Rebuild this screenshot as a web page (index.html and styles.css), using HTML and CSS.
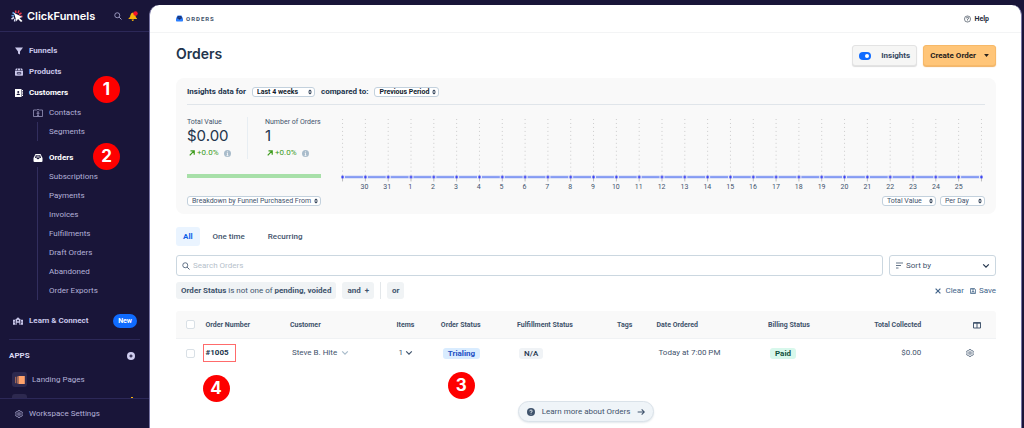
FILE: index.html
```html
<!DOCTYPE html>
<html lang="en">

<head>
    <title>Orders - ClickFunnels</title>
    <meta charset="UTF-8">
    <meta name="viewport" content="width=device-width, initial-scale=1.0">
    <link rel="stylesheet" href="styles.css">
</head>

<body>
    <!-- shared icons -->
    <svg class="defs" aria-hidden="true">
        <symbol id="search" viewBox="0 0 16 16">
            <circle cx="6.5" cy="6.5" r="5" fill="none" stroke="currentColor" stroke-width="1.6" />
            <path d="M10.3 10.3 15 15" stroke="currentColor" stroke-width="1.8" />
        </symbol>
        <symbol id="updown" viewBox="0 0 8 10">
            <path d="M4 0 8 4.2H0zM4 10 8 5.8H0z" fill="currentColor" />
        </symbol>
        <symbol id="chevron" viewBox="0 0 10 10">
            <path d="M1.5 3 5 6.5 8.5 3" fill="none" stroke="currentColor" stroke-width="1.5" />
        </symbol>
        <symbol id="gear" viewBox="0 0 16 16">
            <path d="M6.5 1h3l.6 2 1.5.9 2-.5 1.5 2.6L13.700 7.5v1l1.4 1.5-1.5 2.6-2-.5-1.5.9-.6 2h-3l-.6-2-1.5-.9-2 .5L.9 10l1.4-1.500v-1L.9 6l1.5-2.600 2 .5 1.500-.9z" fill="none" stroke="currentColor" stroke-width="1.5" />
            <circle cx="8" cy="8" r="2.5" fill="none" stroke="currentColor" stroke-width="1.5" />
        </symbol>
        <symbol id="inbox" viewBox="0 0 18 16">
            <path d="M4 0h10l4 8v6q0 2-2 2H2q-2 0-2-2V8z" fill="currentColor" />
            <path d="M4.5 2.5h9L15 8h-3q-.5 2.5-3 2.5T6 8H3z" class="inbox-tray" />
            <path d="M6 4.5h6M5.5 6.500h7" stroke="currentColor" stroke-width="1.2" />
        </symbol>
        <symbol id="info" viewBox="0 0 10 10">
            <circle cx="5" cy="5" r="5" fill="#a9bccb" />
            <path d="M5 2v1.3M5 4.2V8M4 4.6h1M3.7 8h2.6" stroke="#f9f9f9" stroke-width="1.2" />
        </symbol>
        <symbol id="trend" viewBox="0 0 10 10">
            <path d="M1.2 9 8 2M2.5 1.5H8.7V7.8" fill="none" stroke="currentColor" stroke-width="2" />
        </symbol>
    </svg>

    <aside class="sidebar">
        <header class="brand">
            <svg class="logo" viewBox="0 0 24 24">
                <g fill="none" stroke-width="3">
                    <path d="M9 1l1 5M16 1l-2 5" stroke="#e8394a" />
                    <path d="M21 6l-5 3M23 13l-4-1" stroke="#e8394a" />
                    <path d="M3 5l5 3M1 11l5 1" stroke="#6ba7e8" />
                    <path d="M1 18l5-3M7 23l1-5" stroke="#d9dcf5" />
                </g>
                <path d="M6 6 23 14l-6 2 6 6-3 2-6-6-3 5z" fill="#fff" />
            </svg>
            <span class="brand-name">ClickFunnels</span>
            <button type="button" class="icon-button brand-search" aria-label="Search"><svg class="icon"><use href="#search" /></svg></button>
            <button type="button" class="icon-button" aria-label="Notifications">
                <svg class="bell" viewBox="0 0 20 20">
                    <path d="M1 15q4-3 4-7Q6 3 10 3q5 1 5 6 0 4 3 6v1H1zM7 17h5q-1 3-2.5 3T7 17z" fill="#f8b40c" />
                    <circle cx="15" cy="5" r="4.5" fill="#f3122b" />
                </svg>
            </button>
        </header>

        <nav class="menu">
            <a href="#" class="item"><svg class="icon" viewBox="0 0 16 16"><path d="M0 1h16L10 9v6l-4-2V9z" fill="currentColor" /></svg>Funnels</a>
            <a href="#" class="item"><svg class="icon" viewBox="0 0 16 16">
                <path d="M2 1h12l2 4H0zM0 6h16v8q0 1.5-1.5 1.5h-13Q0 15.5 0 14z" fill="currentColor" />
                <path d="M5 1v4M11 1v4M4.5 9h7v3h-7z" stroke="#191539" fill="none" stroke-width="1.4" />
            </svg>Products</a>
            <a href="#" class="item active"><svg class="icon" viewBox="0 0 16 16">
                <path d="M0 0h13v16H0zM14 2h2v3h-2zM14 6.5h2v3h-2zM14 11h2v3h-2z" fill="currentColor" />
                <circle cx="6.5" cy="6" r="2" fill="#191539" />
                <path d="M3 12q0-3 3.5-3t3.5 3z" fill="#191539" />
            </svg>Customers<span class="marker marker-one">1</span></a>
            <a href="#" class="item sub"><svg class="icon wide" viewBox="0 0 20 16">
                <path d="M7 2H1v13h18V2h-6M7 2q3-2.5 6 0" fill="none" stroke="currentColor" stroke-width="1.3" />
                <circle cx="10" cy="6" r="1.5" fill="currentColor" />
                <path d="M7 8.5h6M10 8v3l-2 4M10 11l2 4" fill="none" stroke="currentColor" stroke-width="1.3" />
            </svg>Contacts</a>
            <div class="children">
                <a href="#" class="item">Segments</a>
            </div>
            <a href="#" class="item sub active spaced"><svg class="icon wide"><use href="#inbox" /></svg>Orders<span class="marker marker-two">2</span></a>
            <div class="children">
                <a href="#" class="item">Subscriptions</a>
                <a href="#" class="item">Payments</a>
                <a href="#" class="item">Invoices</a>
                <a href="#" class="item">Fulfillments</a>
                <a href="#" class="item">Draft Orders</a>
                <a href="#" class="item">Abandoned</a>
                <a href="#" class="item">Order Exports</a>
            </div>
            <a href="#" class="item learn"><svg class="icon wide" viewBox="0 0 22 16">
                <path d="M0 5h5L11 0l6 5h5v11h-8v-4H8v4H0z" fill="currentColor" />
                <path d="M5.5 6v10M16.5 6v10M2.7 9v3M19.300 9v3" stroke="#191539" stroke-width="1.4" />
                <circle cx="11" cy="7" r="2" fill="#191539" />
            </svg>Learn &amp; Connect<span class="new">New</span></a>

            <section class="apps">
                <h2>APPS
                    <button type="button" class="icon-button" aria-label="Add app"><svg class="icon" viewBox="0 0 10 10"><circle cx="5" cy="5" r="5" fill="#cfcdf0" /><path d="M5 3v4M3 5h4" stroke="#191539" stroke-width="1.5" /></svg></button>
                </h2>
                <a href="#" class="app"><span class="app-icon"><svg viewBox="0 0 12 10"><path d="M4 0h8v10H4z" fill="#ffa26b" /><path d="M2.7.5v9M.6 1v8" stroke="#c77c5d" stroke-width="1.1" /></svg></span>Landing Pages</a>
                <a href="#" class="app" aria-label="More apps"><span class="app-icon"></span><span class="alert"></span></a>
            </section>
        </nav>

        <a href="#" class="settings"><svg class="icon"><use href="#gear" /></svg>Workspace Settings</a>
    </aside>

    <main>
        <header class="topbar">
            <a href="#" class="crumb"><svg class="icon"><use href="#inbox" /></svg>ORDERS</a>
            <a href="#" class="help"><svg class="icon" viewBox="0 0 16 16"><circle cx="8" cy="8" r="7" fill="none" stroke="currentColor" stroke-width="1.3" /><path d="M5.5 6.5Q5.5 4 8 4t2.5 2.3Q10.5 8 8 8.5V10M8 11.5V13" fill="none" stroke="currentColor" stroke-width="1.5" /></svg>Help</a>
        </header>

        <div class="content">
            <div class="title-row">
                <h1>Orders</h1>
                <label class="button insights-toggle"><input type="checkbox" checked>Insights</label>
                <button type="button" class="button create">Create Order <svg viewBox="0 0 8 5"><path d="M0 0h8L4 5z" fill="currentColor" /></svg></button>
            </div>

            <section class="insights">
                <div class="insights-head">
                    <label for="range">Insights data for</label>
                    <span class="select range"><select id="range"><option>Last 4 weeks</option></select><svg><use href="#updown" /></svg></span>
                    <label for="compare">compared to:</label>
                    <span class="select compare"><select id="compare"><option>Previous Period</option></select><svg><use href="#updown" /></svg></span>
                </div>
                <div class="insights-body">
                    <div class="summary">
                        <div class="stats">
                            <div class="stat">
                                <span>Total Value</span>
                                <strong>$0.00</strong>
                                <em><svg><use href="#trend" /></svg>+0.0%<svg class="info"><use href="#info" /></svg></em>
                            </div>
                            <div class="stat">
                                <span>Number of Orders</span>
                                <strong>1</strong>
                                <em><svg><use href="#trend" /></svg>+0.0%<svg class="info"><use href="#info" /></svg></em>
                            </div>
                        </div>
                        <div class="bar"></div>
                    </div>
                    <div class="chart">
                        <svg class="plot" viewBox="0 0 644 63">
                            <defs>
                                <pattern id="day" x="-4" width="23" height="63" patternUnits="userSpaceOnUse">
                                    <path d="M4.5 0v63" stroke="#cbcbcb" stroke-dasharray="1 3" />
                                    <path d="M4.5 58v5" stroke="#bbb" />
                                    <path d="M0 58.5h23" stroke="#4c6cf0" stroke-width="1.6" />
                                    <path d="M2 58.5h5" stroke="#f9f9f9" stroke-width="2" />
                                    <circle cx="4.5" cy="58.5" r="1.3" fill="#1a24f5" />
                                </pattern>
                            </defs>
                            <rect x="-1" width="647" height="63" fill="url(#day)" />
                        </svg>
                        <div class="days">
                            <span>30</span><span>31</span><span>1</span><span>2</span><span>3</span><span>4</span><span>5</span><span>6</span><span>7</span><span>8</span><span>9</span><span>10</span><span>11</span><span>12</span><span>13</span><span>14</span><span>15</span><span>16</span><span>17</span><span>18</span><span>19</span><span>20</span><span>21</span><span>22</span><span>23</span><span>24</span><span>25</span>
                        </div>
                    </div>
                </div>
                <div class="insights-foot">
                    <span class="select breakdown"><select aria-label="Breakdown"><option>Breakdown by Funnel Purchased From</option></select><svg><use href="#updown" /></svg></span>
                    <span class="select metric"><select aria-label="Metric"><option>Total Value</option></select><svg><use href="#updown" /></svg></span>
                    <span class="select period"><select aria-label="Period"><option>Per Day</option></select><svg><use href="#updown" /></svg></span>
                </div>
            </section>

            <div class="tabs">
                <button type="button" class="tab selected">All</button>
                <button type="button" class="tab">One time</button>
                <button type="button" class="tab">Recurring</button>
            </div>

            <div class="search-row">
                <label class="field search"><svg class="icon"><use href="#search" /></svg><input type="text" placeholder="Search Orders" aria-label="Search Orders"></label>
                <div class="field sort">
                    <svg class="icon" viewBox="0 0 16 16"><path d="M2 2h14M2 7h10M2 12h5" stroke="currentColor" stroke-width="1.6" /></svg>
                    <select aria-label="Sort by"><option>Sort by</option></select>
                    <svg class="icon arrow"><use href="#chevron" /></svg>
                </div>
            </div>

            <div class="filters">
                <button type="button" class="chip"><b>Order Status</b> is not one of <b>pending, voided</b></button>
                <button type="button" class="chip bold">and &nbsp;+</button>
                <span class="separator"></span>
                <button type="button" class="chip bold">or</button>
                <a href="#" class="clear"><svg class="icon" viewBox="0 0 10 10"><path d="M2 2l6 6M8 2 2 8" stroke="currentColor" stroke-width="1.5" /></svg>Clear</a>
                <a href="#" class="save"><svg class="icon" viewBox="0 0 12 12"><path d="M1 1h8l2 2v8H1zM4 1v3h4V1M4 11V7h4v4" fill="none" stroke="currentColor" stroke-width="1.5" /></svg>Save</a>
            </div>

            <table class="orders">
                <thead>
                    <tr>
                        <th class="col-check"><input type="checkbox" aria-label="Select all"></th>
                        <th class="col-number">Order Number</th>
                        <th class="col-customer">Customer</th>
                        <th class="col-items">Items</th>
                        <th class="col-status">Order Status</th>
                        <th class="col-fulfillment">Fulfillment Status</th>
                        <th class="col-tags">Tags</th>
                        <th class="col-date">Date Ordered</th>
                        <th class="col-billing">Billing Status</th>
                        <th class="col-total">Total Collected</th>
                        <th class="col-actions"><button type="button" class="icon-button" aria-label="Columns"><svg class="icon" viewBox="0 0 16 16"><path d="M1 3h14v11H1zM8 3v11M1 4.5h14" fill="none" stroke="currentColor" stroke-width="1.9" /></svg></button></th>
                    </tr>
                </thead>
                <tbody>
                    <tr>
                        <td><input type="checkbox" aria-label="Select order 1005"></td>
                        <td><a href="#" class="order-link">#1005<span class="marker marker-four">4</span></a></td>
                        <td class="inset">Steve B. Hite &nbsp;<svg class="icon faint"><use href="#chevron" /></svg></td>
                        <td class="inset">1 <svg class="icon"><use href="#chevron" /></svg></td>
                        <td class="inset"><span class="tag trialing">Trialing<span class="marker marker-three">3</span></span></td>
                        <td class="inset"><span class="tag">N/A</span></td>
                        <td></td>
                        <td class="inset">Today at 7:00 PM</td>
                        <td class="inset"><span class="tag paid">Paid</span></td>
                        <td class="total">$0.00</td>
                        <td class="row-action"><button type="button" class="icon-button" aria-label="Order settings"><svg class="icon"><use href="#gear" /></svg></button></td>
                    </tr>
                </tbody>
            </table>

            <a href="#" class="learn-more">
                <svg class="icon" viewBox="0 0 16 16"><circle cx="8" cy="8" r="8" fill="currentColor" /><path d="M5.5 6.5Q5.5 4 8 4t2.5 2.3Q10.5 8 8 8.5V10M8 11.5V13" fill="none" stroke="#eff4f8" stroke-width="1.7" /></svg>
                Learn more about Orders
                <svg class="icon" viewBox="0 0 12 12"><path d="M1 6h10M7 2l4 4-4 4" fill="none" stroke="currentColor" stroke-width="1.6" /></svg>
            </a>
        </div>
    </main>
</body>

</html>
```
FILE: styles.css
```css
* {
    box-sizing: border-box;
}

body {
    display: flex;
    min-height: 100vh;
    margin: 0;
    background: #191539;
    color: #3f536c;
    font-family: Roboto, "Liberation Sans", sans-serif;
    font-size: 8px;
    line-height: 10px;
}

a {
    color: inherit;
    text-decoration: none;
}

button,
input,
select {
    margin: 0;
    color: inherit;
    font: inherit;
}

h1,
h2 {
    margin: 0;
}

.defs {
    position: absolute;
    width: 0;
    height: 0;
}

.icon {
    flex: none;
    width: 8px;
    height: 8px;
}

.icon-button {
    display: inline-flex;
    padding: 0;
    border: 0;
    background: none;
    vertical-align: middle;
}

/* Sidebar */
.sidebar {
    display: flex;
    flex: none;
    flex-direction: column;
    width: 149px;
    height: 100vh;
    color: #b3b1d8;
}

.brand {
    display: flex;
    flex: none;
    align-items: center;
    height: 32px;
    padding: 0 11px;
    border-bottom: 1px solid #2c2858;
}

.logo {
    width: 12px;
    height: 12px;
    margin-right: 4px;
}

.brand-name {
    color: #fff;
    font-family: Inter, sans-serif;
    font-size: 11px;
    font-weight: 600;
}

.brand-search {
    margin: 0 6px 0 auto;
}

.bell {
    width: 10px;
    height: 10px;
}

.menu {
    flex: 1;
    min-height: 0;
    padding-top: 8px;
    overflow: hidden;
}

.item {
    display: flex;
    position: relative;
    align-items: center;
    height: 21px;
    padding-left: 15px;
    color: #c9c7ea;
    font-weight: 700;
}

.item .icon {
    margin-right: 6px;
}

.item .wide {
    width: 10px;
}

.sub,
.children .item {
    height: 19px;
    padding-left: 33px;
    color: #b3b1d8;
    font-weight: 400;
}

.children {
    margin-left: 37px;
    border-left: 1px solid #322e5e;
}

.children .item {
    padding-left: 11px;
}

.item.active {
    color: #fff;
    font-weight: 700;
}

.spaced {
    margin-top: 7px;
}

.inbox-tray {
    fill: #191539;
}

.learn {
    margin: 10px 9px 0;
    padding: 0 3px 0 4px;
}

.new {
    margin-left: auto;
    padding: 2px 5px;
    border-radius: 7px;
    background: #0f6bff;
    color: #fff;
    font-size: 7px;
}

.apps {
    margin: 8px 9px 0;
    border-top: 1px solid #2c2858;
}

.apps h2 {
    display: flex;
    align-items: center;
    justify-content: space-between;
    height: 32px;
    padding-right: 5px;
    color: #d9d8f2;
    font-size: 8px;
}

.app {
    display: flex;
    align-items: center;
    gap: 5px;
    height: 15px;
    margin: 0 3px 7px;
}

.app-icon {
    display: flex;
    align-items: center;
    justify-content: center;
    width: 15px;
    height: 15px;
    border-radius: 3px;
    background: #2d294f;
}

.app-icon svg {
    width: 10px;
    height: 8px;
}

.alert {
    width: 2px;
    height: 9px;
    margin: 0 4px 0 auto;
    background: #f8b40c;
}

.settings {
    display: flex;
    flex: none;
    align-items: center;
    gap: 6px;
    height: 30px;
    padding-left: 15px;
    border-top: 1px solid #2c2858;
}

/* Red step markers */
.marker {
    position: absolute;
    z-index: 1;
    width: 27px;
    height: 27px;
    border-radius: 50%;
    background: #fe0000;
    color: #fff;
    font-family: Inter, sans-serif;
    font-size: 17px;
    font-weight: 700;
    line-height: 27px;
    text-align: center;
}

.marker-one {
    top: -6px;
    left: 93px;
}

.marker-two {
    top: -5px;
    left: 93px;
}

.marker-three {
    top: 24px;
    left: 5px;
}

.marker-four {
    top: 30px;
    left: -1px;
}

/* Main panel */
main {
    flex: 1;
    min-width: 0;
    margin: 5px 2px 0 0;
    border: 1px solid #7774a3;
    border-width: 0 1px;
    border-radius: 10px 10px 0 0;
    background: #fff;
}

.topbar {
    display: flex;
    align-items: center;
    justify-content: space-between;
    height: 28px;
    padding: 0 32px 0 26px;
    border-bottom: 1px solid #f3f4f5;
}

.crumb,
.help {
    display: flex;
    align-items: center;
    gap: 3px;
    font-size: 7px;
    font-weight: 700;
}

.crumb {
    font-size: 6px;
    letter-spacing: 1px;
}

.crumb .icon {
    width: 7px;
    height: 7px;
    color: #2b7fff;
}

.crumb .inbox-tray {
    fill: #fff;
}

.help {
    color: #1f2d3d;
}

.help .icon {
    width: 7px;
}

.content {
    padding: 0 25px 0 26px;
}

.title-row {
    display: flex;
    align-items: center;
    gap: 6px;
    height: 45px;
}

h1 {
    margin: 0 auto 4px 0;
    color: #22344c;
    font-family: Inter, sans-serif;
    font-size: 14px;
    font-weight: 600;
    line-height: 18px;
}

.button {
    display: flex;
    align-items: center;
    height: 21px;
    border: 1px solid #e3e3e3;
    border-radius: 3px;
    background: #f6f6f5;
    box-shadow: 0 1px 1px #ddd;
    color: #34475f;
    font-weight: 700;
}

.insights-toggle {
    gap: 10px;
    padding: 0 6px;
}

.insights-toggle input {
    display: flex;
    align-items: center;
    justify-content: flex-end;
    width: 12px;
    height: 8px;
    padding: 2px;
    border-radius: 4px;
    background: #0f6bff;
    appearance: none;
}

.insights-toggle input::before {
    width: 4px;
    height: 4px;
    border-radius: 50%;
    background: #fff;
    content: "";
}

.create {
    gap: 8px;
    padding: 0 6px;
    border-color: #f7b968;
    background: #ffc578;
    box-shadow: 0 1px 1px #f0b060;
    color: #26201b;
}

.create svg {
    width: 5px;
    height: 3px;
}

.insights {
    padding: 0 11px 8px;
    border-radius: 8px;
    background: #f9f9f9;
}

.insights-head {
    display: flex;
    align-items: center;
    gap: 6px;
    height: 27px;
    padding-top: 2px;
    border-bottom: 1px solid #e0e5ea;
    color: #22344c;
    font-weight: 700;
}

.select {
    display: flex;
    position: relative;
}

.select select {
    width: 100%;
    height: 10px;
    padding: 0 4px;
    border: 1px solid #c3d1dd;
    border-radius: 3px;
    background: #fff;
    font-size: 7px;
    line-height: 8px;
    appearance: none;
}

.select svg {
    position: absolute;
    top: 2px;
    right: 3px;
    width: 4px;
    height: 6px;
    color: #22344c;
    pointer-events: none;
}

.range {
    width: 63px;
}

.compare {
    width: 65px;
}

.insights-body {
    display: flex;
    gap: 21px;
    height: 91px;
    padding: 12px 4px 0 0;
}

.summary {
    flex: none;
    width: 134px;
}

.stats {
    display: flex;
    height: 57px;
}

.stat {
    display: flex;
    flex: none;
    flex-direction: column;
    height: 42px;
    font-size: 7px;
    white-space: nowrap;
}

.stat:first-child {
    width: 61px;
    margin-right: 17px;
    border-right: 1px solid #e8eef3;
}

.stat strong {
    color: #22344c;
    font-family: Inter, sans-serif;
    font-size: 15px;
    font-weight: 400;
    line-height: 18px;
}

.stat em {
    display: flex;
    align-items: center;
    gap: 2px;
    margin-top: 2px;
    padding-left: 2px;
    color: #3d9b1c;
    font-size: 8px;
    font-style: normal;
    line-height: 12px;
}

.stat svg {
    width: 6px;
    height: 6px;
}

.stat .info {
    width: 7px;
    height: 7px;
    margin-left: 3px;
}

.bar {
    height: 4px;
    background: #a8e0a9;
}

.chart {
    flex: 1;
    min-width: 0;
    padding-top: 2px;
}

.plot {
    display: block;
    width: 100%;
    overflow: visible;
}

.days {
    display: flex;
    padding: 0 11px;
    font-size: 7px;
    text-align: center;
}

.days span {
    flex: 1;
}

.insights-foot {
    display: flex;
    gap: 4px;
}

.breakdown {
    width: 134px;
    margin-right: auto;
}

.metric {
    width: 54px;
}

.period {
    width: 45px;
}

.range select,
.compare select {
    color: #111c2d;
    font-weight: 700;
}

/* Filters */
.tabs {
    display: flex;
    gap: 3px;
    margin: 13px 0 9px;
}

.tab {
    height: 19px;
    padding: 0 7px;
    border: 0;
    border-radius: 3px;
    background: none;
    font-weight: 500;
}

.tab + .tab {
    padding: 0 10px;
}

.tab.selected {
    background: #eaf4ff;
    color: #0f5fe8;
    font-weight: 700;
}

.search-row {
    display: flex;
    gap: 6px;
}

.field {
    display: flex;
    align-items: center;
    gap: 3px;
    height: 21px;
    padding: 0 5px;
    border: 1px solid #cbd7e0;
    border-radius: 3px;
}

.search {
    flex: 1;
}

.field input,
.field select {
    flex: 1;
    min-width: 0;
    padding: 0;
    border: 0;
    outline: 0;
    background: none;
    appearance: none;
}

.field input::placeholder {
    color: #b6c1cb;
}

.sort {
    width: 107px;
}

.arrow {
    color: #22344c;
}

.filters {
    display: flex;
    align-items: center;
    gap: 6px;
    margin-top: 6px;
}

.chip {
    height: 17px;
    padding: 0 5px;
    border: 0;
    border-radius: 3px;
    background: #f0f3f5;
    white-space: pre;
}

.chip b,
.chip.bold {
    font-weight: 700;
}

.separator {
    width: 1px;
    height: 17px;
    background: #e3e7ea;
}

.clear,
.save {
    display: flex;
    align-items: center;
    gap: 3px;
    color: #44658a;
}

.clear {
    margin-left: auto;
}

.save .icon {
    width: 6px;
}

/* Orders table */
.orders {
    width: 100%;
    margin-top: 12px;
    border-spacing: 0;
    table-layout: fixed;
}

.orders th {
    height: 28px;
    padding: 0;
    border-bottom: 1px solid #f0f2f4;
    background: #f9f9f9;
    font-size: 7px;
    font-weight: 700;
    text-align: left;
    white-space: nowrap;
}

.orders th:first-child {
    border-radius: 3px 0 0 0;
}

.orders th:last-child {
    border-radius: 0 3px 0 0;
}

.orders td {
    height: 28px;
    padding: 0;
    white-space: nowrap;
}

.orders input {
    display: block;
    width: 9px;
    height: 9px;
    margin-left: 10px;
    border: 1px solid #d9e0e6;
    border-radius: 2px;
    background: #fff;
    appearance: none;
}

.orders td .icon {
    vertical-align: middle;
}

.orders td.inset {
    padding-left: 2px;
}

.orders .faint {
    color: #a9bccb;
}

.orders td.total,
.orders th.col-total {
    text-align: right;
}

.col-check {
    width: 3.6%;
}

.col-number {
    width: 10.3%;
}

.col-customer {
    width: 13%;
}

.col-items {
    width: 5.4%;
}

.col-status {
    width: 9.3%;
}

.col-fulfillment {
    width: 12.2%;
}

.col-tags {
    width: 4.8%;
}

.col-date {
    width: 13.6%;
}

.col-billing {
    width: 9.7%;
}

.col-total {
    width: 9%;
}

.orders .col-actions {
    padding-right: 15px;
    text-align: right;
}

.orders .row-action {
    padding-right: 22px;
    text-align: right;
}

.order-link {
    display: block;
    position: relative;
    width: 33px;
    margin-left: -3px;
    padding: 3px 2px;
    border: 1px solid #ff6b6b;
    color: #22344c;
    font-weight: 700;
}

.tag {
    display: inline-block;
    position: relative;
    padding: 0 5px;
    border-radius: 3px;
    background: #f0f3f6;
    color: #22344c;
    font-weight: 500;
    line-height: 11px;
}

.trialing {
    background: #d9ecff;
    color: #1d4fc4;
    font-weight: 700;
}

.paid {
    background: #d8f8ec;
    color: #12503c;
    font-weight: 700;
}

.learn-more {
    display: flex;
    align-items: center;
    gap: 7px;
    width: max-content;
    height: 21px;
    margin: 34px auto 0;
    padding: 0 8px;
    border: 1px solid #dae2e9;
    border-radius: 11px;
    background: #eff4f8;
    box-shadow: 0 1px 2px #e3e8ec;
}
```
